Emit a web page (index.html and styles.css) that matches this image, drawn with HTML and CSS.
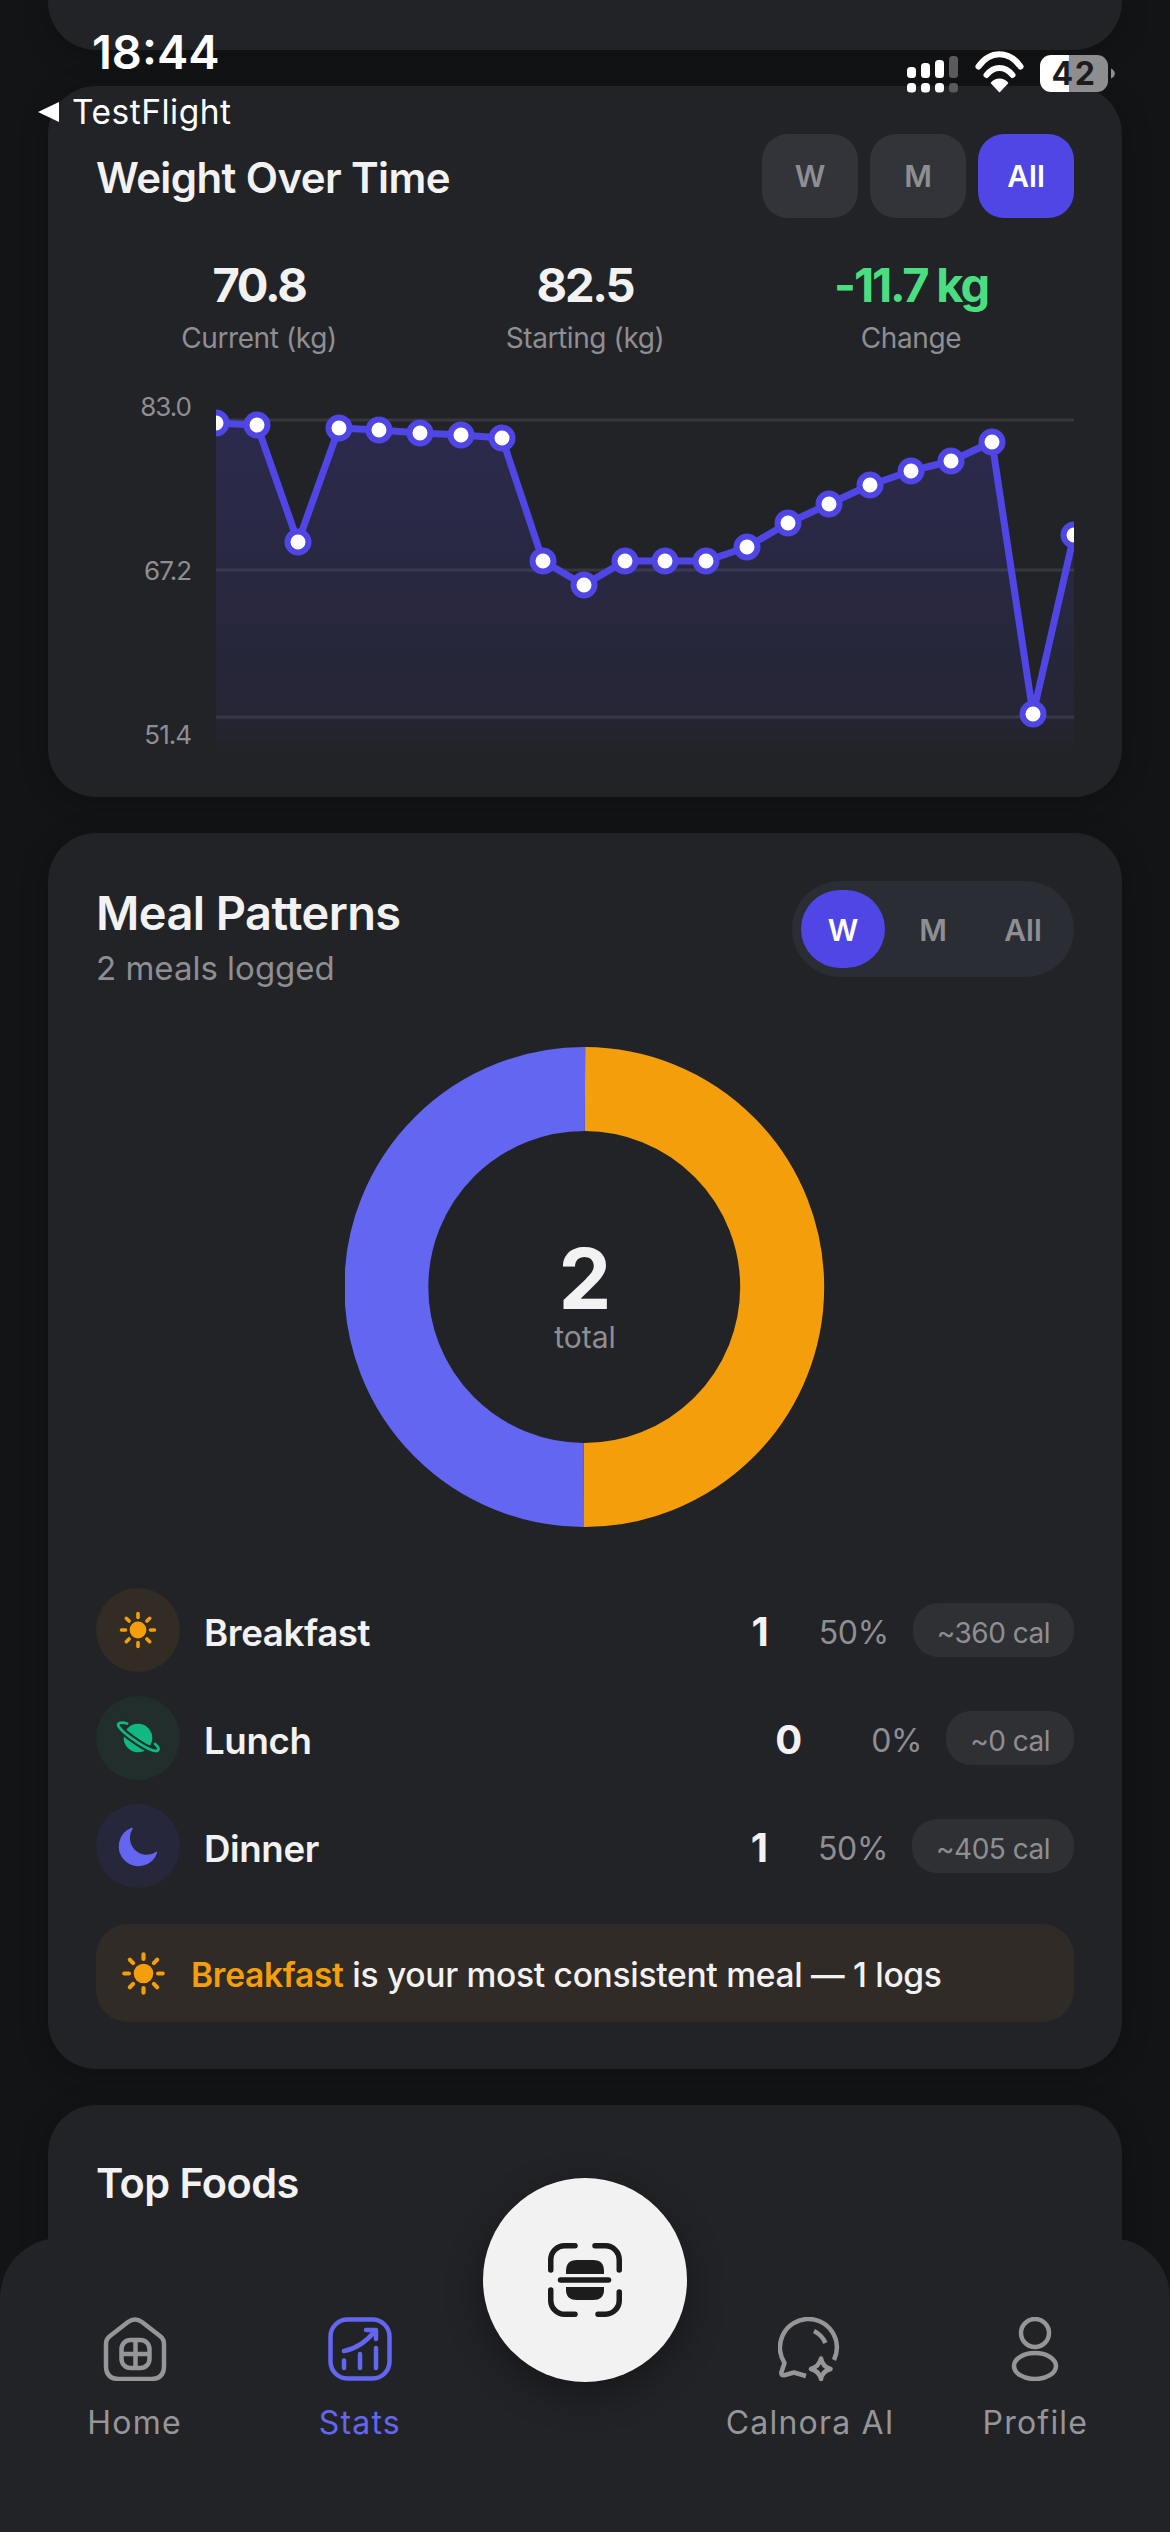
FILE: index.html
```html
<!DOCTYPE html>
<html>
<head>
	<meta charset="utf-8">
	<title>Stats</title>
	<link rel="stylesheet" href="styles.css">
</head>
<body>
<div class="phone">

	<div class="scroll">
		<div class="card stub"></div>

		<section class="card weight">
			<div class="row-between">
				<h2 class="title weight-title">Weight Over Time</h2>
				<div class="range">
					<span class="range-btn">W</span>
					<span class="range-btn">M</span>
					<span class="range-btn on">All</span>
				</div>
			</div>
			<div class="stats">
				<div class="stat"><b>70.8</b><span>Current (kg)</span></div>
				<div class="stat"><b>82.5</b><span>Starting (kg)</span></div>
				<div class="stat"><b class="green">-11.7 kg</b><span>Change</span></div>
			</div>
			<div class="chart">
				<div class="axis"><span>83.0</span><span>67.2</span><span>51.4</span></div>
				<svg class="plot" viewBox="216 390 858 362" width="858" height="362">
					<defs>
						<linearGradient id="area" x1="0" y1="0" x2="0" y2="1">
							<stop offset="0" stop-color="#4f46e5" stop-opacity=".2"/>
							<stop offset=".88" stop-color="#4f46e5" stop-opacity=".08"/>
							<stop offset="1" stop-color="#4f46e5" stop-opacity=".01"/>
						</linearGradient>
					</defs>
					<g class="grid">
						<line x1="216" y1="420" x2="1074" y2="420"/>
						<line x1="216" y1="570" x2="1074" y2="570"/>
						<line x1="216" y1="717" x2="1074" y2="717"/>
					</g>
					<path class="area" d="M216 423 257 425 298 542 339 428 379 430 420 433 461 435 502 438 543 561 584 585 625 561 665 561 706 561 747 547 788 523 829 504 870 485 911 471 951 461 992 442 1033 714 1074 535V748H216Z"/>
					<polyline class="line" points="216,423 257,425 298,542 339,428 379,430 420,433 461,435 502,438 543,561 584,585 625,561 665,561 706,561 747,547 788,523 829,504 870,485 911,471 951,461 992,442 1033,714 1074,535"/>
					<g class="dots">
						<circle cx="216" cy="423" r="10.5"/><circle cx="257" cy="425" r="10.5"/><circle cx="298" cy="542" r="10.5"/>
						<circle cx="339" cy="428" r="10.5"/><circle cx="379" cy="430" r="10.5"/><circle cx="420" cy="433" r="10.5"/>
						<circle cx="461" cy="435" r="10.5"/><circle cx="502" cy="438" r="10.5"/><circle cx="543" cy="561" r="10.5"/>
						<circle cx="584" cy="585" r="10.5"/><circle cx="625" cy="561" r="10.5"/><circle cx="665" cy="561" r="10.5"/>
						<circle cx="706" cy="561" r="10.5"/><circle cx="747" cy="547" r="10.5"/><circle cx="788" cy="523" r="10.5"/>
						<circle cx="829" cy="504" r="10.5"/><circle cx="870" cy="485" r="10.5"/><circle cx="911" cy="471" r="10.5"/>
						<circle cx="951" cy="461" r="10.5"/><circle cx="992" cy="442" r="10.5"/><circle cx="1033" cy="714" r="10.5"/>
						<circle cx="1074" cy="535" r="10.5"/>
					</g>
				</svg>
			</div>
		</section>

		<section class="card meals">
			<div class="row-between top">
				<div>
					<h2 class="title meal-title">Meal Patterns</h2>
					<p class="sub">2 meals logged</p>
				</div>
				<div class="pill">
					<span class="pill-btn on">W</span>
					<span class="pill-btn">M</span>
					<span class="pill-btn">All</span>
				</div>
			</div>

			<div class="donut">
				<svg viewBox="0 0 480 480" width="480" height="480">
					<path d="M240 42A198 198 0 0 1 238.500 438" fill="none" stroke="#f59e0b" stroke-width="84"/>
					<path d="M238.500 438A198 198 0 0 1 240 42" fill="none" stroke="#6366f1" stroke-width="84"/>
				</svg>
				<div class="donut-mid"><b>2</b><span>total</span></div>
			</div>

			<div class="rows">
				<div class="meal">
					<div class="meal-ico sun-bg">
						<svg viewBox="0 0 84 84" width="84" height="84">
							<circle cx="42" cy="42" r="8.4" fill="#f59e0b"/>
							<path class="rays" d="M42 25.500v4M42 54.500v4M25.500 42h4M54.500 42h4M30.300 30.300l2.800 2.800M50.900 50.900l2.800 2.800M30.300 53.700l2.800-2.800M50.900 33.100l2.800-2.800"/>
						</svg>
					</div>
					<span class="meal-name">Breakfast</span>
					<b class="count">1</b>
					<span class="pct">50%</span>
					<span class="chip">~360 cal</span>
				</div>
				<div class="meal">
					<div class="meal-ico planet-bg">
						<svg viewBox="0 0 84 84" width="84" height="84">
							<circle cx="42" cy="42" r="14.300" fill="#10b981"/>
							<path d="M31 27.500C25 25.500 20 27 23 31 28 38 52 55 60 55 64 55 63 51 59 48" fill="none" stroke="#212e2c" stroke-width="7"/>
							<path d="M31 27.500C25 25.500 20 27 23 31 28 38 52 55 60 55 64 55 63 51 59 48" fill="none" stroke="#10b981" stroke-width="2.800" stroke-linecap="round"/>
						</svg>
					</div>
					<span class="meal-name">Lunch</span>
					<b class="count">0</b>
					<span class="pct">0%</span>
					<span class="chip">~0 cal</span>
				</div>
				<div class="meal">
					<div class="meal-ico moon-bg">
						<svg viewBox="0 0 84 84" width="84" height="84">
							<path d="M36 24.500A19 19 0 1 0 60.500 48.500 17.500 17.500 0 0 1 36 24.500Z" fill="#6366f1" stroke="#6366f1" stroke-width="1.500" stroke-linejoin="round"/>
						</svg>
					</div>
					<span class="meal-name">Dinner</span>
					<b class="count">1</b>
					<span class="pct">50%</span>
					<span class="chip">~405 cal</span>
				</div>
			</div>

			<div class="insight">
				<svg viewBox="21 21 42 42" width="49" height="49">
					<circle cx="42" cy="42" r="8.4" fill="#f59e0b"/>
					<path class="rays" d="M42 25.500v4M42 54.500v4M25.500 42h4M54.500 42h4M30.300 30.300l2.800 2.800M50.900 50.900l2.800 2.800M30.300 53.700l2.800-2.800M50.900 33.100l2.800-2.800"/>
				</svg>
				<p><b>Breakfast</b> is your most consistent meal — 1 logs</p>
			</div>
		</section>

		<section class="card foods">
			<h2 class="title small">Top Foods</h2>
		</section>
	</div>

	<div class="statusbar">
		<span class="clock">18:44</span>
		<svg class="status-ico" viewBox="880 30 260 80" width="260" height="80">
			<g fill="#fff">
				<rect x="907" y="67" width="9" height="11" rx="3.5"/><rect x="921" y="63" width="9" height="15" rx="3.5"/><rect x="935" y="60" width="9" height="18" rx="3.5"/>
				<rect x="907" y="83" width="9" height="9.5" rx="3.5"/><rect x="921" y="83" width="9" height="9.5" rx="3.5"/><rect x="935" y="83" width="9" height="9.5" rx="3.5"/>
			</g>
			<g fill="#5a5a5c">
				<rect x="949" y="56" width="9" height="22" rx="3.5"/><rect x="949" y="83" width="9" height="9.5" rx="3.5"/>
			</g>
			<path d="M978.500 66.500C990 50 1009 50 1020.500 66.500M986.500 75C994 65.500 1005 65.500 1012.500 75" fill="none" stroke="#fff" stroke-width="6" stroke-linecap="round"/>
			<path d="M991.500 83C996 78 1003 78 1007.500 83L999.500 91.500Z" fill="#fff" stroke="#fff" stroke-width="1.500" stroke-linejoin="round"/>
			<path d="M1111 68.500c2.500 1 3.800 3 3.800 5s-1.300 4-3.800 5Z" fill="#8e8e90"/>
		</svg>
		<div class="battery"><span>42</span></div>
		<div class="back"><i class="back-arrow"></i><span>TestFlight</span></div>
	</div>

	<nav class="tabbar">
		<a class="tab">
			<svg viewBox="0 0 64 64" width="64" height="64">
				<path d="M3 27Q3 22 7 19L25 5Q32 0 39 5L57 19Q61 22 61 27V49Q61 62 48 62H16Q3 62 3 49Z"/>
				<rect x="18.500" y="23" width="28" height="28" rx="9"/>
				<path d="M32.500 23V51M18.500 37H46.500"/>
			</svg>
			<span>Home</span>
		</a>
		<a class="tab active">
			<svg viewBox="0 0 64 64" width="64" height="64">
				<rect x="2.500" y="2.500" width="59" height="59" rx="17"/>
				<path d="M16 34C27 32 38 25 47 14M38 13H48V22M16 43.500V51M32 37V51M48 31V51" stroke-linecap="round" stroke-linejoin="round"/>
			</svg>
			<span>Stats</span>
		</a>
		<div class="tab-gap"></div>
		<a class="tab">
			<svg viewBox="0 0 64 64" width="64" height="64">
				<path d="M56 43A28.500 28.500 0 1 0 6.500 46L3.500 55Q2.500 59 7 58L16 55.500 28 59" stroke-linejoin="round"/>
				<path d="M36 14Q44 18 47.500 26"/>
				<path class="spark" d="M43 41.500Q44.500 49.500 52.500 52 44.500 54 43 62 41 54 33 52 41 49.500 43 41.500Z"/>
			</svg>
			<span>Calnora AI</span>
		</a>
		<a class="tab">
			<svg viewBox="0 0 64 64" width="64" height="64">
				<circle cx="32" cy="16" r="14"/>
				<ellipse cx="32" cy="49" rx="21" ry="13"/>
			</svg>
			<span>Profile</span>
		</a>
		<div class="fab">
			<svg viewBox="0 0 74 74" width="74" height="74">
				<path class="fab-line" d="M2.750 27V17A14 14 0 0 1 16.750 2.750H27M47 2.750H57A14 14 0 0 1 71.250 17V27M2.750 47V57A14 14 0 0 0 16.750 71.250H27M71.250 49V57A14 14 0 0 1 57 71.250H50"/>
				<path class="fab-fill" d="M18 31V28Q18 17 29 17H45Q56 17 56 28V31ZM18 44H56V47Q56 57 45 57H29Q18 57 18 47Z"/>
				<path class="fab-line" d="M12.500 37H60.500"/>
			</svg>
		</div>
	</nav>
</div>
</body>
</html>
```

FILE: styles.css
```css
* {
	box-sizing: border-box;
}

html, body {
	margin: 0;
	padding: 0;
	background: #131416;
}

body {
	font-family: Inter, "Liberation Sans", sans-serif;
	color: #f2f2f2;
}

.phone {
	position: relative;
	width: 1170px;
	height: 2532px;
	overflow: hidden;
	background: #131416;
}

.scroll {
	display: flex;
	flex-direction: column;
	gap: 36px;
	padding: 0 48px;
}

.card {
	background: #222327;
	border-radius: 48px;
	padding: 48px;
	box-shadow: 0 4px 28px rgba(0, 0, 0, .25);
}

.stub {
	height: 50px;
	padding: 0;
	border-radius: 0 0 48px 48px;
}

.row-between {
	display: flex;
	justify-content: space-between;
	align-items: center;
}

.row-between.top {
	align-items: flex-start;
}

.title {
	margin: 0;
	font-size: 47px;
	line-height: 64px;
	font-weight: 600;
	letter-spacing: -.6px;
	color: #f2f2f2;
}

.title.weight-title {
	font-size: 42px;
	margin-top: 4px;
}

.title.small {
	font-size: 41.500px;
}

.sub {
	margin: 3px 0 0;
	font-size: 33px;
	line-height: 40px;
	color: #8e8e93;
}

/* weight card */
.weight {
	padding-bottom: 45px;
}

.range {
	display: flex;
	gap: 12px;
}

.range-btn {
	width: 96px;
	height: 84px;
	border-radius: 26px;
	background: #333439;
	color: #8e8e93;
	font-size: 30px;
	font-weight: 600;
	display: flex;
	align-items: center;
	justify-content: center;
}

.range-btn.on {
	background: #4f46e5;
	color: #fff;
}

.stats {
	display: grid;
	grid-template-columns: repeat(3, 1fr);
	margin-top: 40px;
	text-align: center;
}

.stat b {
	display: block;
	font-size: 47px;
	line-height: 54px;
	font-weight: 700;
	letter-spacing: -2.200px;
}

.stat span {
	display: block;
	margin-top: 9px;
	font-size: 28px;
	line-height: 34px;
	color: #8e8e93;
	letter-spacing: -.4px;
}

.stat b.green {
	color: #4ade80;
}

.chart {
	display: flex;
	gap: 25px;
	margin-top: 35px;
}

.axis {
	width: 95px;
	height: 362px;
	display: flex;
	flex-direction: column;
	justify-content: space-between;
	align-items: flex-end;
	font-size: 26px;
	line-height: 34px;
	color: #8e8e93;
	letter-spacing: -1px;
}

.plot {
	display: block;
}

.grid line {
	stroke: #37383d;
	stroke-width: 3;
}

.area {
	fill: url(#area);
}

.line {
	fill: none;
	stroke: #4f46e5;
	stroke-width: 7;
	stroke-linejoin: round;
}

.dots circle {
	fill: #fff;
	stroke: #4f46e5;
	stroke-width: 6;
}

/* meal card */
.meals {
	padding-bottom: 47px;
}

.pill {
	display: flex;
	gap: 6px;
	padding: 9px;
	border-radius: 48px;
	background: #2a2d34;
}

.pill-btn {
	width: 84px;
	height: 78px;
	padding-top: 2px;
	border-radius: 39px;
	color: #8e8e93;
	font-size: 30px;
	font-weight: 600;
	display: flex;
	align-items: center;
	justify-content: center;
}

.pill-btn.on {
	background: #4f46e5;
	color: #fff;
}

.donut {
	display: grid;
	justify-content: center;
	align-items: center;
	margin-top: 59px;
}

.donut svg, .donut-mid {
	grid-area: 1 / 1;
}

.donut svg {
	display: block;
}

.donut-mid {
	text-align: center;
	padding-top: 18px;
}

.donut-mid b {
	display: block;
	font-size: 84px;
	line-height: 82px;
	font-weight: 700;
}

.donut-mid span {
	display: block;
	font-size: 30px;
	line-height: 34px;
	color: #8e8e93;
}

.rows {
	display: flex;
	flex-direction: column;
	gap: 24px;
	margin-top: 61px;
}

.meal {
	display: flex;
	align-items: center;
	height: 84px;
	gap: 24px;
}

.meal-ico {
	width: 84px;
	height: 84px;
	border-radius: 50%;
	flex: none;
}

.meal-ico svg {
	display: block;
}

.sun-bg {
	background: #322c24;
}

.planet-bg {
	background: #212e2c;
}

.moon-bg {
	background: #26273a;
}

.rays {
	fill: none;
	stroke: #f59e0b;
	stroke-width: 3.600;
	stroke-linecap: round;
}

.meal-name {
	flex: 1;
	padding-top: 5px;
	font-size: 36.700px;
	font-weight: 600;
	letter-spacing: -.4px;
}

.count {
	padding-top: 3px;
	font-size: 40px;
	font-weight: 700;
}

.pct {
	min-width: 96px;
	padding-top: 5px;
	text-align: right;
	font-size: 32px;
	letter-spacing: -.3px;
	color: #8e8e93;
}

.chip {
	height: 54px;
	padding: 5px 24px 0;
	border-radius: 25px;
	background: #2f3034;
	color: #8e8e93;
	font-size: 28px;
	letter-spacing: -.5px;
	display: flex;
	align-items: center;
}

.insight {
	display: flex;
	align-items: center;
	gap: 23px;
	height: 98px;
	margin-top: 36px;
	padding-left: 23px;
	border-radius: 32px;
	background: #302b27;
}

.insight p {
	margin: 2px 0 0;
	font-size: 33.600px;
	font-weight: 500;
	letter-spacing: -.3px;
	color: #f2f2f2;
}

.insight b {
	font-weight: 600;
	color: #f59e0b;
}

.foods {
	height: 400px;
	padding-top: 46px;
}

/* status bar */
.statusbar {
	position: absolute;
	left: 0;
	top: 0;
	width: 1170px;
	height: 130px;
}

.clock {
	position: absolute;
	left: 92px;
	top: 24px;
	font-size: 47px;
	line-height: 56px;
	font-weight: 600;
	color: #fff;
}

.status-ico {
	position: absolute;
	left: 880px;
	top: 30px;
}

.battery {
	position: absolute;
	left: 1040px;
	top: 55px;
	width: 68px;
	height: 37px;
	border-radius: 11px;
	background: linear-gradient(90deg, #fff 0 29px, #8e8e90 29px);
	color: #1c1c1e;
	font-size: 32px;
	font-weight: 700;
	letter-spacing: 1.500px;
	text-align: center;
	line-height: 37px;
}

.back {
	position: absolute;
	left: 38px;
	top: 90px;
	display: flex;
	align-items: center;
	gap: 13px;
	font-size: 33.500px;
	line-height: 44px;
	color: #fff;
	letter-spacing: .5px;
}

.back-arrow {
	width: 0;
	height: 0;
	border-style: solid;
	border-width: 10px 21px 10px 0;
	border-color: transparent #fff transparent transparent;
}

/* tab bar */
.tabbar {
	position: absolute;
	left: 0;
	top: 2238px;
	width: 1170px;
	height: 294px;
	padding: 79px 22px 0;
	display: grid;
	grid-template-columns: repeat(5, 1fr);
	align-items: start;
	background: #222327;
	border-radius: 60px 60px 0 0;
}

.tab {
	display: flex;
	flex-direction: column;
	align-items: center;
	gap: 22px;
	color: #969698;
	font-size: 32px;
	line-height: 40px;
	letter-spacing: 1.200px;
}

.tab svg {
	display: block;
	fill: none;
	stroke: currentColor;
	stroke-width: 4.500;
}

.tab svg .spark {
	fill: none;
	stroke-width: 4.500;
	stroke-linejoin: round;
}

.tab.active {
	color: #6366f1;
}

.fab {
	position: absolute;
	left: 483px;
	top: -60px;
	width: 204px;
	height: 204px;
	border-radius: 50%;
	background: #f2f2f2;
	box-shadow: 0 12px 36px rgba(0, 0, 0, .35);
	display: flex;
	align-items: center;
	justify-content: center;
}

.fab-line {
	fill: none;
	stroke: #1c1c1e;
	stroke-width: 5.500;
	stroke-linecap: round;
}

.fab-fill {
	fill: #1c1c1e;
}
```
